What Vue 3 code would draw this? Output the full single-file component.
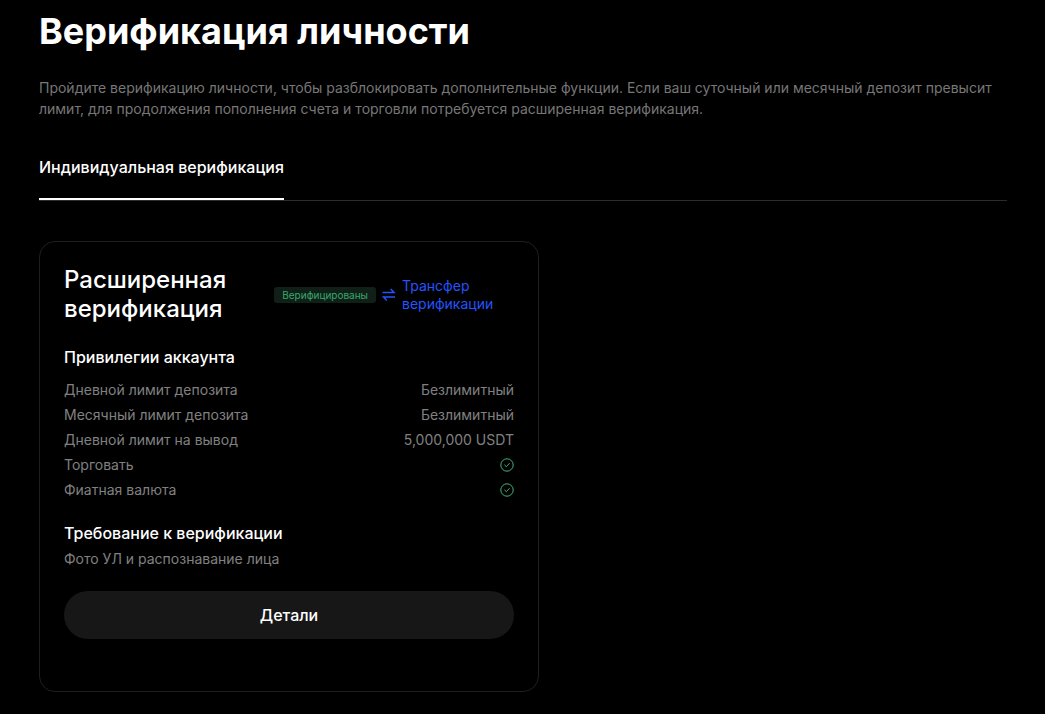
<script setup>
const limits = [
  { label: 'Дневной лимит депозита', value: 'Безлимитный' },
  { label: 'Месячный лимит депозита', value: 'Безлимитный' },
  { label: 'Дневной лимит на вывод', value: '5,000,000 USDT' },
  { label: 'Торговать' },
  { label: 'Фиатная валюта' },
]
</script>

<template>
  <main class="page">
    <h1 class="title">Верификация личности</h1>
    <p class="intro">
      Пройдите верификацию личности, чтобы разблокировать дополнительные функции. Если ваш суточный или месячный депозит превысит лимит, для продолжения пополнения счета и торговли потребуется расширенная верификация.
    </p>
    <div class="tabs" role="tablist">
      <button class="tab" role="tab" aria-selected="true">Индивидуальная верификация</button>
    </div>

    <section class="card">
      <header class="head">
        <h2 class="name">Расширенная верификация</h2>
        <div class="status">
          <span class="badge">Верифицированы</span>
          <a class="transfer" href="#">
            <svg class="swap" viewBox="0 0 14 14" aria-hidden="true">
              <path d="M.5 4.5H12L8.7 1M13 9H1.5l3.3 3.5" />
            </svg>
            <span>Трансфер верификации</span>
          </a>
        </div>
      </header>

      <h3 class="sub">Привилегии аккаунта</h3>
      <dl class="rows">
        <div v-for="row in limits" :key="row.label" class="row">
          <dt>{{ row.label }}</dt>
          <dd>
            <template v-if="row.value">{{ row.value }}</template>
            <svg v-else class="check" viewBox="0 0 14 14" role="img" aria-label="Доступно">
              <circle cx="7" cy="7" r="6.2" />
              <path d="M4.4 6.8l1.9 1.9 3.3-3.5" />
            </svg>
          </dd>
        </div>
      </dl>

      <h3 class="sub need">Требование к верификации</h3>
      <p class="note">Фото УЛ и распознавание лица</p>
      <button class="details">Детали</button>
    </section>
  </main>
</template>

<style>
body {
  background: #000;
}
</style>

<style scoped>
.page {
  box-sizing: border-box;
  padding: 8px 38px 22px 39px;
  color: #fff;
  font-family: Inter, "Liberation Sans", sans-serif;
  font-size: 14px;
}
h1, h2, h3, p, dl, dd {
  margin: 0;
}
.title {
  font-size: 36px;
  line-height: 46px;
  font-weight: 700;
}
.intro {
  margin-top: 23px;
  line-height: 21px;
  color: #777;
}
.tabs {
  display: flex;
  margin-top: 36px;
  border-bottom: 1px solid #2b2b2e;
}
.tab {
  padding: 0 0 19px;
  border: 0;
  border-bottom: 2px solid #fff;
  background: none;
  color: #fff;
  font: 500 16px/24px Inter, "Liberation Sans", sans-serif;
}
.card {
  box-sizing: border-box;
  max-width: 500px;
  margin-top: 40px;
  padding: 23px 24px 52px;
  border: 1px solid #1f1f1f;
  border-radius: 16px;
}
.head {
  display: flex;
  align-items: center;
}
.name {
  flex: 1;
  font-size: 24px;
  line-height: 29px;
  font-weight: 500;
}
.status {
  display: flex;
  align-items: center;
  gap: 6px;
  padding-top: 2px;
}
.badge {
  padding: 0 8px;
  border-radius: 3px;
  background: #102018;
  color: #36a86b;
  font-size: 10px;
  line-height: 16px;
}
.transfer {
  display: flex;
  align-items: center;
  gap: 6px;
  width: 132px;
  color: #2354ff;
  line-height: 18px;
  text-decoration: none;
}
.swap {
  flex: none;
  width: 14px;
  height: 14px;
  fill: none;
  stroke: currentColor;
  stroke-width: 1.5;
}
.sub {
  margin-top: 22px;
  font-size: 16px;
  line-height: 24px;
  font-weight: 500;
}
.rows {
  margin-top: 8px;
  color: #808080;
}
.row {
  display: flex;
  justify-content: space-between;
  line-height: 25px;
}
.row dd {
  display: flex;
  align-items: center;
}
.check {
  width: 14px;
  height: 14px;
  fill: none;
  stroke: #3fb578;
}
.need {
  margin-top: 19px;
}
.note {
  margin-top: 4px;
  line-height: 20px;
  color: #808080;
}
.details {
  width: 100%;
  height: 48px;
  margin-top: 22px;
  border: 0;
  border-radius: 24px;
  background: #171717;
  color: #fff;
  font: 500 16px/24px Inter, "Liberation Sans", sans-serif;
}
</style>
